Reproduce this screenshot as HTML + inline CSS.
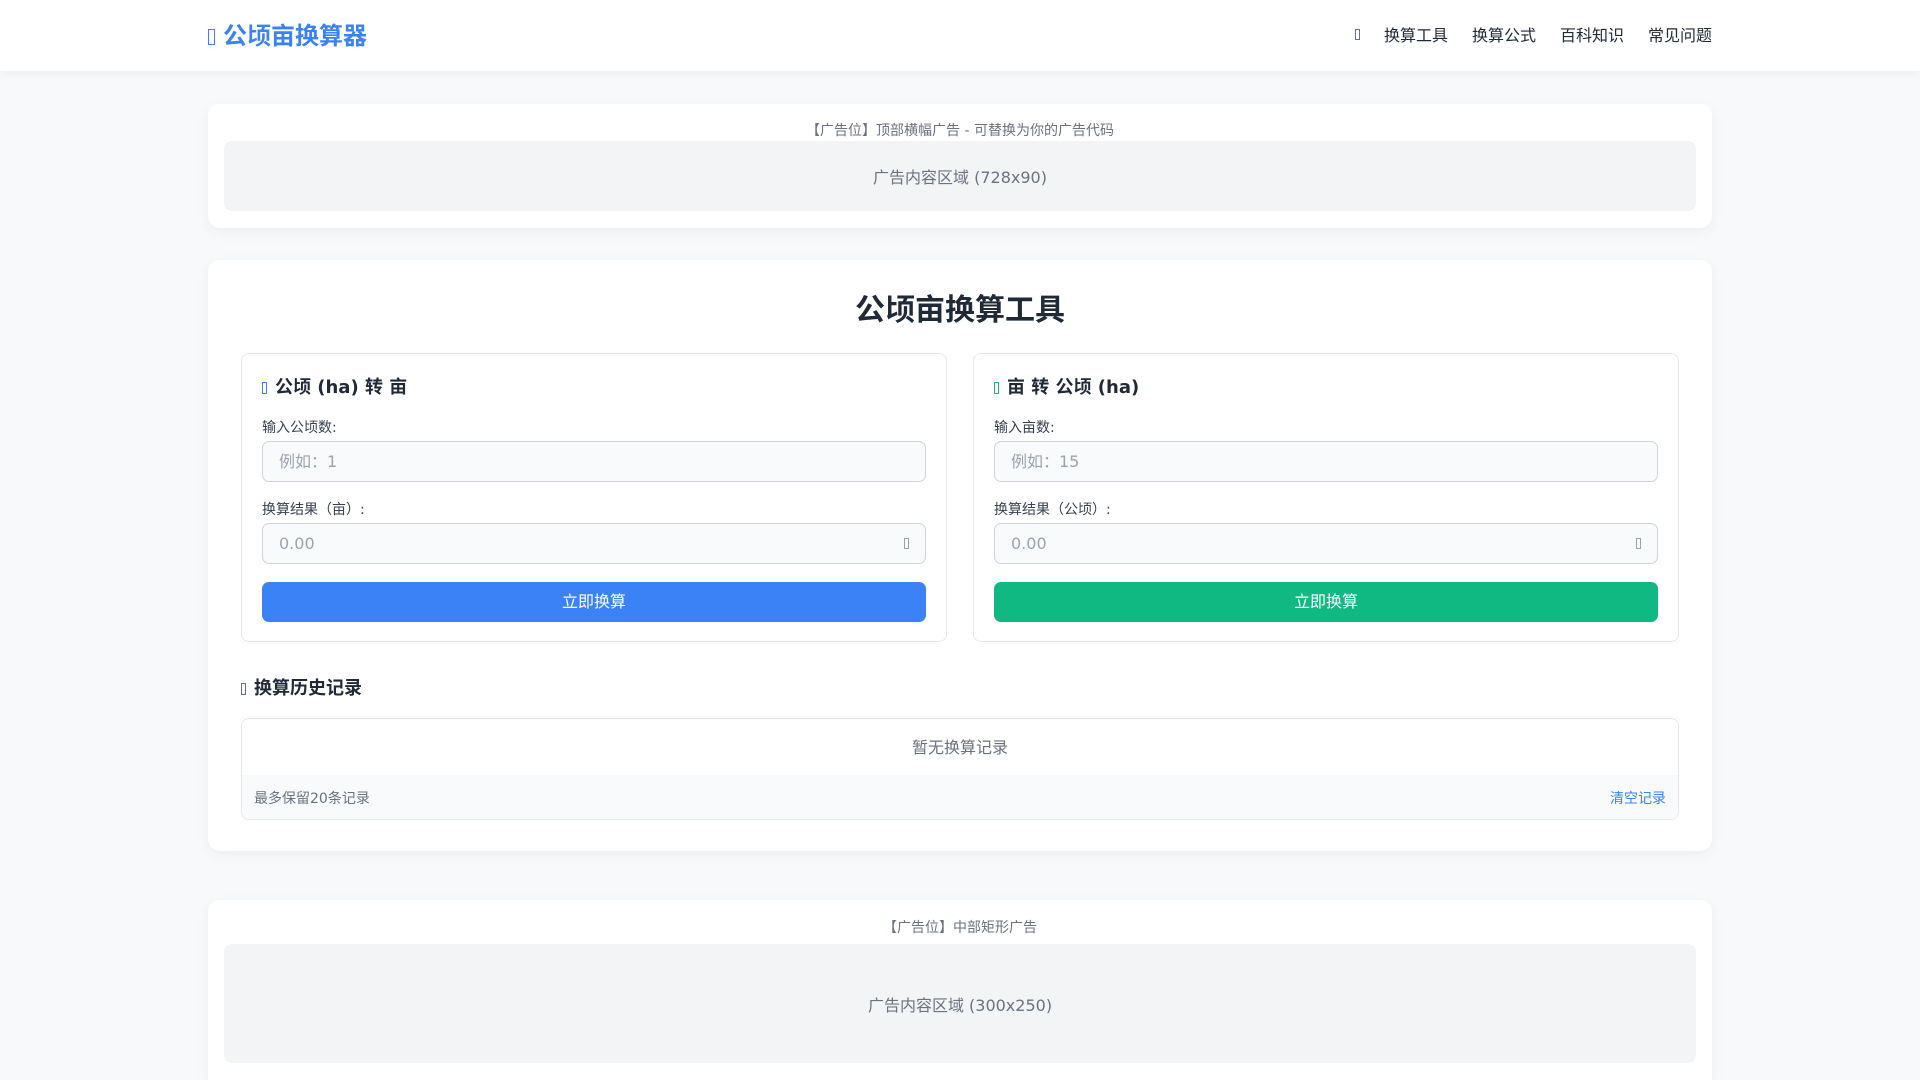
<!DOCTYPE html>
<html><head><meta charset="utf-8">
<style>
*{box-sizing:border-box;margin:0;padding:0}
html{width:1920px;height:1080px;overflow:hidden}
body{width:1920px;height:1080px;overflow:hidden;position:relative;background:#f8f9fb;font-family:"DejaVu Sans","Noto Sans CJK SC",sans-serif;color:#1f2937}
.hdr{position:absolute;left:0;top:0;width:1920px;height:71px;background:#fff;box-shadow:0 2px 10px rgba(0,0,0,.06)}
.box{display:inline-block;width:6px;height:13px;border:1px solid currentColor;vertical-align:middle}
.logo{position:absolute;left:208px;top:16px;font-size:24px;font-weight:bold;color:#3b82f6}
.logo .box{width:7px;height:16px;margin-right:8px;vertical-align:-1px}
.nav{position:absolute;right:208px;top:22px;font-size:16px;color:#1f2937;display:flex;gap:24px;align-items:center}
.nav .box{color:#6b7280;height:11px;width:5px}
.card{position:absolute;left:208px;width:1504px;background:#fff;border-radius:12px;box-shadow:0 4px 14px rgba(0,0,0,.05)}
.adlab{text-align:center;font-size:14px;color:#6b7280}
.adbox{position:absolute;left:16px;right:16px;background:#f3f4f6;border-radius:8px;display:flex;align-items:center;justify-content:center;font-size:16px;color:#6b7280}
h1{position:absolute;top:25px;width:100%;text-align:center;font-size:30px;font-weight:bold;color:#1f2937}
.panel{position:absolute;top:93px;width:706px;height:289px;border:1px solid #e5e7eb;border-radius:8px;padding:0 20px}
.ph{position:absolute;top:19px;left:20px;font-size:18px;font-weight:bold}
.ph .box{width:5px;height:12px;margin-right:8px}
.lab{position:absolute;left:20px;font-size:14px;color:#374151}
.inp{position:absolute;left:20px;right:20px;height:41px;background:#f8fafc;border:1px solid #d1d5db;border-radius:7px;font-size:16px;color:#9ca3af;padding:9px 16px;line-height:22px}
.inp .box{position:absolute;right:16px;top:14px;width:5px;height:11px;color:#9ca3af}
.btn{position:absolute;left:20px;right:20px;top:228px;height:40px;border-radius:7px;color:#fff;font-size:16px;text-align:center;line-height:40px}
</style></head><body>
<div class="hdr">
 <div class="logo"><span class="box"></span>公顷亩换算器</div>
 <div class="nav"><span class="box"></span><span>换算工具</span><span>换算公式</span><span>百科知识</span><span>常见问题</span></div>
</div>

<div class="card" style="top:104px;height:124px">
 <div class="adlab" style="position:absolute;top:16px;width:100%">【广告位】顶部横幅广告 - 可替换为你的广告代码</div>
 <div class="adbox" style="top:37px;height:70px">广告内容区域 (728x90)</div>
</div>

<div class="card" style="top:260px;height:591px">
 <h1>公顷亩换算工具</h1>
 <div class="panel" style="left:33px">
  <div class="ph"><span class="box" style="color:#3b82f6"></span>公顷 (ha) 转 亩</div>
  <div class="lab" style="top:63px">输入公顷数:</div>
  <div class="inp" style="top:87px">例如：1</div>
  <div class="lab" style="top:145px">换算结果（亩）:</div>
  <div class="inp" style="top:169px">0.00<span class="box"></span></div>
  <div class="btn" style="background:#3b82f6">立即换算</div>
 </div>
 <div class="panel" style="left:765px">
  <div class="ph"><span class="box" style="color:#10b981"></span>亩 转 公顷 (ha)</div>
  <div class="lab" style="top:63px">输入亩数:</div>
  <div class="inp" style="top:87px">例如：15</div>
  <div class="lab" style="top:145px">换算结果（公顷）:</div>
  <div class="inp" style="top:169px">0.00<span class="box"></span></div>
  <div class="btn" style="background:#10b981">立即换算</div>
 </div>
 <div style="position:absolute;left:33px;top:414px;font-size:18px;font-weight:bold"><span class="box" style="width:5px;height:12px;margin-right:8px;color:#6b7280"></span>换算历史记录</div>
 <div style="position:absolute;left:33px;top:458px;width:1438px;height:102px;border:1px solid #e5e7eb;border-radius:8px;overflow:hidden">
  <div style="text-align:center;font-size:16px;color:#6b7280;margin-top:15px">暂无换算记录</div>
  <div style="position:absolute;left:0;right:0;bottom:0;height:44px;background:#f9fafb;font-size:14px;color:#6b7280;padding:13px 12px">最多保留20条记录<span style="float:right;color:#3b82f6">清空记录</span></div>
 </div>
</div>

<div class="card" style="top:900px;height:180px;border-radius:12px 12px 0 0">
 <div class="adlab" style="position:absolute;top:17px;width:100%">【广告位】中部矩形广告</div>
 <div class="adbox" style="top:44px;height:119px">广告内容区域 (300x250)</div>
</div>
</body></html>
